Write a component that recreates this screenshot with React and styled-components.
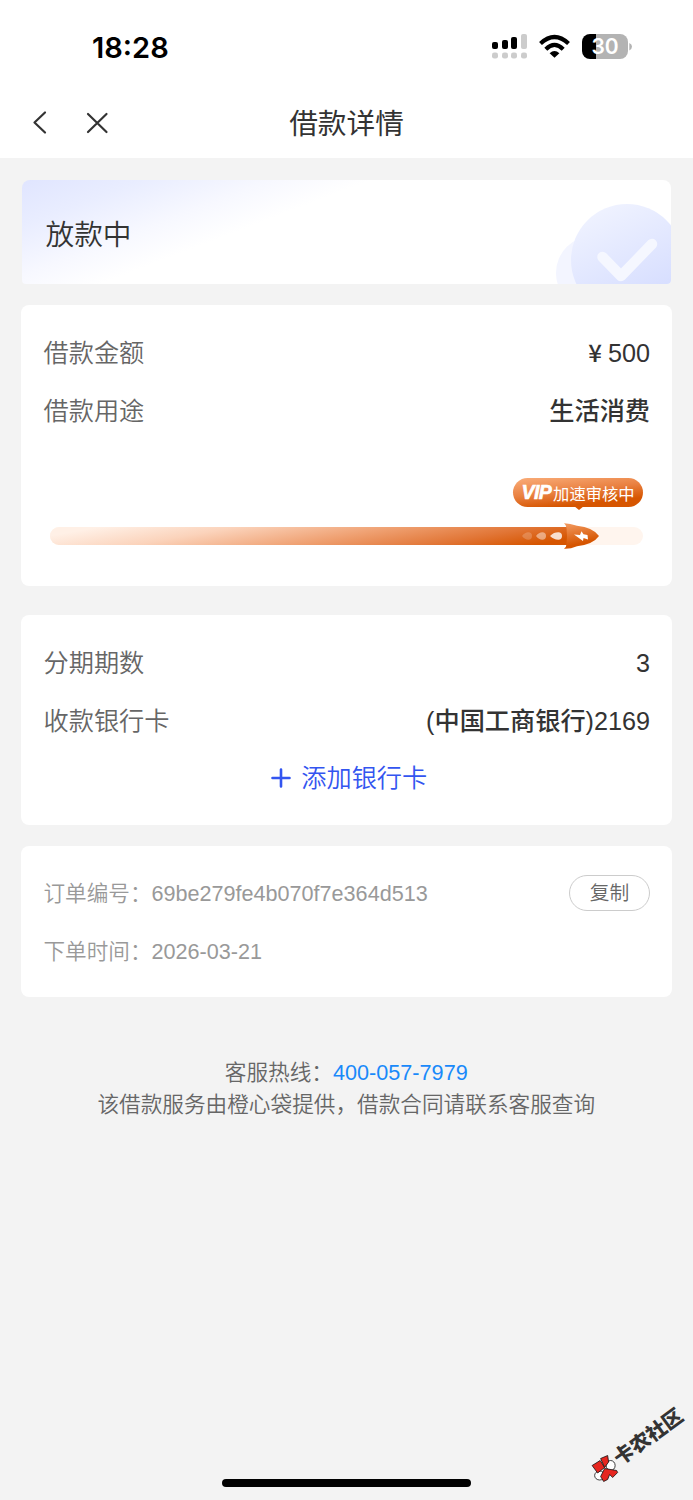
import styled, { createGlobalStyle } from "styled-components";

const GlobalStyle = createGlobalStyle`
  * {
    box-sizing: border-box;
  }

  body {
    margin: 0;
    background: #f3f3f3;
    font-family: "Liberation Sans", "Noto Sans CJK SC", sans-serif;
    font-weight: 350;
    color: #333;
  }
`;

const Page = styled.div`
  position: relative;
  display: flex;
  flex-direction: column;
  height: 1500px;
  overflow: hidden;
  background: #f3f3f3;
`;

const Header = styled.header`
  background: #fff;
  height: 158px;
`;

const StatusBar = styled.div`
  display: flex;
  align-items: center;
  justify-content: space-between;
  height: 94px;
  padding: 0 61px 0 92px;
`;

const Time = styled.span`
  font-family: Inter, sans-serif;
  font-size: 29px;
  font-weight: 600;
  color: #000;
`;

const NavBar = styled.nav`
  display: grid;
  grid-template-columns: 1fr auto 1fr;
  align-items: center;
  height: 58px;
  padding: 0 28px;
`;

const NavIcons = styled.div`
  display: flex;
  gap: 34px;
`;

const NavTitle = styled.h1`
  margin: 0;
  padding-top: 2px;
  font-size: 28.7px;
  font-weight: 400;
  line-height: 40px;
`;

const Main = styled.main`
  display: flex;
  flex-direction: column;
  padding: 22px 21.5px 0 21px;
`;

const StatusCard = styled.section`
  display: flex;
  align-items: center;
  justify-content: space-between;
  height: 104px;
  margin: 0 0.5px 21px 1px;
  padding-left: 23.5px;
  border-radius: 8px 8px 4px 4px;
  overflow: hidden;
  background: linear-gradient(159deg, #e0e5ff 0%, #e9edff 13%, #f7f8ff 27%, #fff 38%);
  font-size: 28.7px;
  line-height: 46px;
`;

const StatusText = styled.span`
  padding-top: 6px;
`;

const Card = styled.section`
  height: ${(p) => p.$height}px;
  margin-bottom: ${(p) => p.$gap || 0}px;
  padding: 19px 21.5px 0 22.5px;
  border-radius: 8px;
  background: #fff;
`;

const Row = styled.div`
  display: flex;
  align-items: center;
  justify-content: space-between;
  height: 58px;
  font-size: 25.2px;
  line-height: 57px;
`;

const Label = styled.span`
  color: #666;
`;

const Value = styled.span`
  font-weight: 500;
  color: #333;
`;

const Yen = styled.span`
  margin-right: 6px;
  font-family: "Noto Sans CJK SC", sans-serif;
  font-size: 24px;
  line-height: 1;
`;

const Progress = styled.div`
  display: flex;
  flex-direction: column;
  align-items: flex-end;
  margin-top: 38px;
  padding: 0 7px 0 6.5px;
`;

const VipBadge = styled.div`
  position: relative;
  display: flex;
  align-items: center;
  justify-content: center;
  width: 130px;
  height: 29px;
  margin-bottom: 20px;
  border-radius: 15px;
  background: linear-gradient(174deg, #f8a873 5%, #e98040 45%, #d65500 78%);
  color: #fff;
  font-size: 16.3px;
  font-weight: 400;
  white-space: nowrap;

  &::after {
    content: "";
    position: absolute;
    top: 28px;
    left: 61px;
    border: 5px solid transparent;
    border-top: 4px solid #d65500;
    border-bottom: 0;
  }
`;

const VipText = styled.b`
  margin-right: 2px;
  font-size: 19.5px;
  font-style: italic;
  letter-spacing: -0.6px;
  -webkit-text-stroke: 0.6px #fff;
`;

const Track = styled.div`
  width: 100%;
  height: 18px;
  border-radius: 9px;
  background: #fff5ee;
`;

const Fill = styled.div`
  position: relative;
  width: 520px;
  height: 18px;
  border-radius: 9px 0 0 9px;
  background: linear-gradient(
    170deg,
    #fff0e6 8%,
    #fbd3bb 30%,
    #efa071 56%,
    #e17535 78%,
    #d65500 94%
  );
`;

const Rocket = styled.svg`
  position: absolute;
  top: -5px;
  right: -30px;
`;

const AddCard = styled.div`
  display: flex;
  align-items: center;
  justify-content: center;
  gap: 10px;
  height: 56px;
  font-size: 25.2px;
  line-height: 56px;
  color: #3355f0;
  padding-left: 5px;
`;

const OrderRow = styled(Row)`
  font-size: 21.6px;
  line-height: 58px;
  color: #999;
`;

const CopyButton = styled.button`
  width: 81px;
  height: 36px;
  margin-bottom: 2px;
  padding: 0;
  border: 1px solid #ccc;
  border-radius: 18px;
  background: #fff;
  font-family: inherit;
  font-size: 19.8px;
  font-weight: inherit;
  line-height: 33px;
  color: #666;
`;

const Footer = styled.footer`
  margin-top: 60px;
  font-size: 21.65px;
  line-height: 32.4px;
  text-align: center;
  color: #666;
`;

const Phone = styled.a`
  color: #1989fa;
`;

const HomeIndicator = styled.div`
  width: 249px;
  height: 8px;
  margin: auto auto 13px;
  border-radius: 4px;
  background: #000;
`;

const Watermark = styled.div`
  position: absolute;
  left: 583px;
  top: 1431px;
  display: flex;
  align-items: center;
  font-size: 20px;
  line-height: 24px;
  font-weight: 900;
  color: #333;
  white-space: nowrap;
  transform: rotate(-36deg);
`;

const StatusIcons = () => (
  <svg width="142" height="28" viewBox="490 33 142 28">
    <g fill="#000">
      <rect x="492" y="42" width="6" height="7" rx="2" />
      <rect x="502" y="40" width="6" height="9" rx="2" />
      <rect x="511" y="37" width="6" height="12" rx="2" />
    </g>
    <g fill="#ccc">
      <rect x="521" y="34" width="6" height="15" rx="2" />
      <rect x="492" y="52.5" width="6" height="6" rx="2.2" />
      <rect x="502" y="52.5" width="6" height="6" rx="2.2" />
      <rect x="511" y="52.5" width="6" height="6" rx="2.2" />
      <rect x="521" y="52.5" width="6" height="6" rx="2.2" />
    </g>
    <g fill="none" stroke="#000" strokeWidth="4.2">
      <path d="M540.5 43.5Q554.5 30.5 568.5 43.5" />
      <path d="M545.8 49.2Q554.5 40.6 563.2 49.2" />
    </g>
    <path d="M549.6 53.2Q554.5 49 559.4 53.2L554.5 57.8Z" fill="#000" />
    <path d="M596 34H620a8 8 0 0 1 8 8V51a8 8 0 0 1-8 8H596Z" fill="#b3b3b3" />
    <path d="M596 34H590a8 8 0 0 0-8 8V51a8 8 0 0 0 8 8H596Z" fill="#000" />
    <path d="M629.3 43Q632 44 632 46.5T629.3 50.5Z" fill="#b3b3b3" />
    <text
      x="605"
      y="54"
      textAnchor="middle"
      fill="#fff"
      fontFamily="Inter, sans-serif"
      fontSize="21"
      fontWeight="600"
    >
      30
    </text>
  </svg>
);

const BackIcon = () => (
  <svg width="24" height="26" fill="none" stroke="#333" strokeWidth="2.2" strokeLinecap="round" strokeLinejoin="round">
    <path d="M17 2.5L6.5 12.5L17 22.5" />
  </svg>
);

const CloseIcon = () => (
  <svg width="24" height="26" fill="none" stroke="#333" strokeWidth="2.2" strokeLinecap="round">
    <path d="M2 4L20.5 22M20.5 4L2 22" />
  </svg>
);

const CheckArt = () => (
  <svg width="116" height="104" viewBox="555 180 116 104">
    <defs>
      <linearGradient id="disc" x1="0.25" y1="0" x2="0.65" y2="0.8">
        <stop offset="0" stopColor="#f0f3ff" />
        <stop offset="1" stopColor="#d8dfff" />
      </linearGradient>
    </defs>
    <circle cx="593" cy="273" r="37" fill="#f3f5ff" />
    <circle cx="627" cy="260" r="56" fill="url(#disc)" />
    <path
      d="M602.5 257L621 276L652 244"
      fill="none"
      stroke="#f5f7ff"
      strokeWidth="10.5"
      strokeLinecap="round"
      strokeLinejoin="round"
    />
  </svg>
);

const RocketArt = () => (
  <Rocket width="80" height="28" viewBox="520 522 80 28">
    <defs>
      <linearGradient id="rocket" x1="0" y1="0" x2="0.3" y2="1">
        <stop offset="0.1" stopColor="#f09458" />
        <stop offset="0.85" stopColor="#d65500" />
      </linearGradient>
    </defs>
    <g fill="#fff">
      <path d="M522 536C524 533.5 526 532.3 528.3 532.3A3.7 3.7 0 0 1 528.3 539.7C526 539.7 524 538.5 522 536Z" opacity="0.2" />
      <path d="M536 536C538 533.5 540 532.3 542.3 532.3A3.7 3.7 0 0 1 542.3 539.7C540 539.7 538 538.5 536 536Z" opacity="0.45" />
      <path d="M550 536C553 533.3 555 532.3 558.3 532.3A3.7 3.7 0 0 1 558.3 539.7C555 539.7 553 538.7 550 536Z" opacity="0.8" />
    </g>
    <path
      d="M564 523.2Q570 523.2 577 525.8Q593 527.5 599 536Q593 544.5 577 546.2Q570 549.2 564 548.8Q566.5 547 566.5 544L567 536L566.5 528Q566.5 525 564 523.2Z"
      fill="url(#rocket)"
    />
    <path d="M574 534.5L580 535L581.5 531.2L583.5 534.2L587.5 535L588 539.5L583.5 538L583 541Z" fill="#fff" />
  </Rocket>
);

const MascotIcon = () => (
  <svg width="28" height="28" viewBox="-14 -14 28 28" stroke="#111" strokeWidth="0.8">
    <g transform="rotate(36)">
      <ellipse cx="6" cy="-3" rx="4.5" ry="5" fill="#fff" />
      <ellipse cx="-5" cy="7" rx="5" ry="4.5" fill="#fff" />
      <path d="M-12.5 -3L-4.5 -8L0 -1L-7 4.5Z" fill="#e5261f" />
      <path d="M-4 -10L3 -13L4 -6.5L0 -1Z" fill="#e5261f" />
      <path d="M0 0L12 2L13 4L8 9L5 6L3 11L-1 13L-4 8Z" fill="#e5261f" />
    </g>
  </svg>
);

const App = () => {
  return (
    <Page>
      <GlobalStyle />
      <Header>
        <StatusBar>
          <Time>18:28</Time>
          <StatusIcons />
        </StatusBar>
        <NavBar>
          <NavIcons>
            <BackIcon />
            <CloseIcon />
          </NavIcons>
          <NavTitle>借款详情</NavTitle>
        </NavBar>
      </Header>
      <Main>
        <StatusCard>
          <StatusText>放款中</StatusText>
          <CheckArt />
        </StatusCard>
        <Card $height={281} $gap={29}>
          <Row>
            <Label>借款金额</Label>
            <Value>
              <Yen>¥</Yen>500
            </Value>
          </Row>
          <Row>
            <Label>借款用途</Label>
            <Value>生活消费</Value>
          </Row>
          <Progress>
            <VipBadge>
              <VipText>VIP</VipText>
              加速审核中
            </VipBadge>
            <Track>
              <Fill>
                <RocketArt />
              </Fill>
            </Track>
          </Progress>
        </Card>
        <Card $height={210} $gap={21}>
          <Row>
            <Label>分期期数</Label>
            <Value>3</Value>
          </Row>
          <Row>
            <Label>收款银行卡</Label>
            <Value>(中国工商银行)2169</Value>
          </Row>
          <AddCard>
            <svg width="20" height="20" stroke="#3355f0" strokeWidth="2.6" strokeLinecap="round">
              <path d="M10 1.5V18.5M1.5 10H18.5" />
            </svg>
            添加银行卡
          </AddCard>
        </Card>
        <Card $height={151}>
          <OrderRow>
            <span>订单编号：69be279fe4b070f7e364d513</span>
            <CopyButton>复制</CopyButton>
          </OrderRow>
          <OrderRow>
            <span>下单时间：2026-03-21</span>
          </OrderRow>
        </Card>
        <Footer>
          <div>
            客服热线：<Phone>400-057-7979</Phone>
          </div>
          <div>该借款服务由橙心袋提供，借款合同请联系客服查询</div>
        </Footer>
      </Main>
      <HomeIndicator />
      <Watermark>
        <MascotIcon />
        卡农社区
      </Watermark>
    </Page>
  );
};

export default App;
